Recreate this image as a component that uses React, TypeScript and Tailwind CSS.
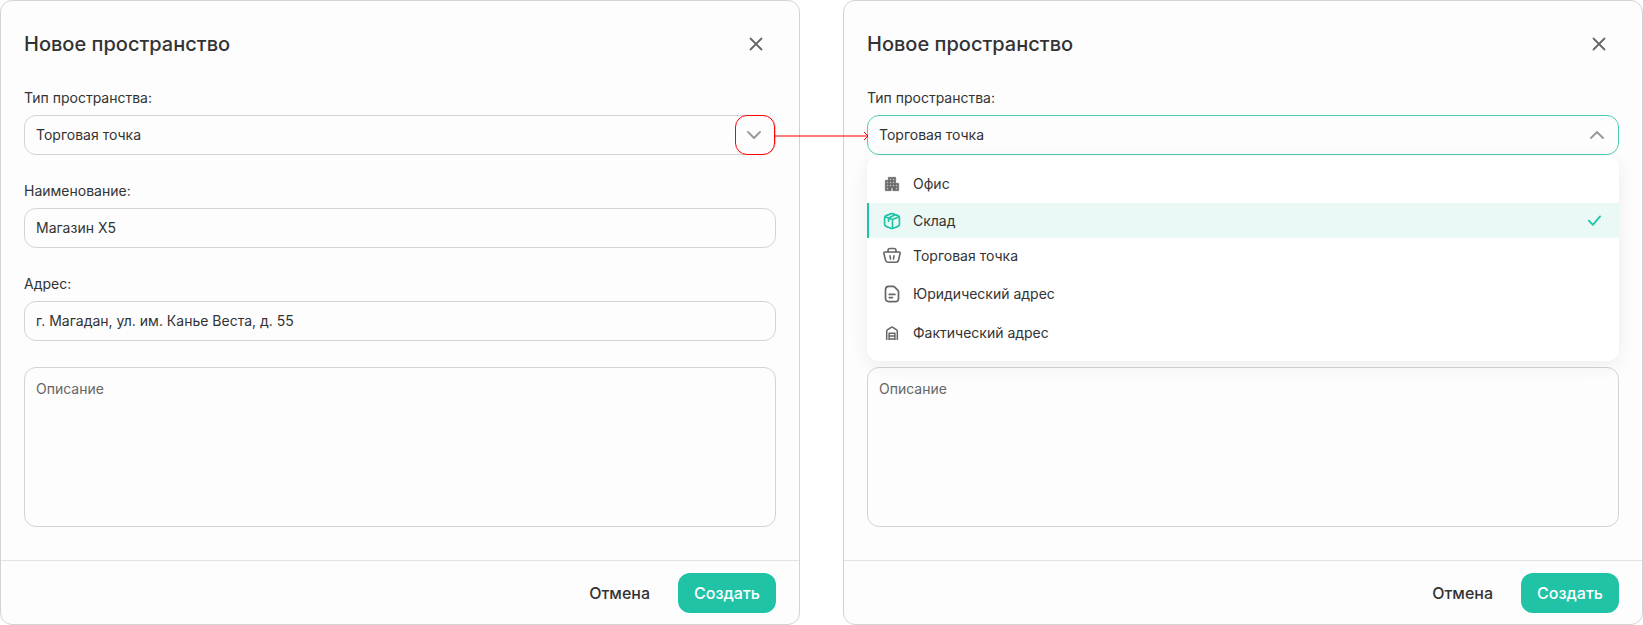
import type { ReactNode } from "react";

const line = {
  fill: "none",
  stroke: "currentColor",
  strokeWidth: 1.5,
  strokeLinecap: "round" as const,
  strokeLinejoin: "round" as const,
};

function CloseIcon() {
  return (
    <svg width="14" height="14" viewBox="0 0 14 14" {...line} strokeWidth={1.8}>
      <path d="M1.5 1.5l11 11M12.5 1.5l-11 11" />
    </svg>
  );
}

function ChevronIcon({ up = false }: { up?: boolean }) {
  return (
    <svg width="14" height="8" viewBox="0 0 14 8" {...line} strokeWidth={1.8}>
      <path d={up ? "M1 7l6-6 6 6" : "M1 1l6 6 6-6"} />
    </svg>
  );
}

function OfficeIcon() {
  return (
    <svg width="18" height="18" viewBox="0 0 24 24" fill="currentColor" stroke="currentColor" strokeWidth="0.6">
      <path d="M17 11V3H7v4H3v14h8v-4h2v4h8V11h-4zM7 19H5v-2h2v2zm0-4H5v-2h2v2zm0-4H5V9h2v2zm4 4H9v-2h2v2zm0-4H9V9h2v2zm0-4H9V5h2v2zm4 8h-2v-2h2v2zm0-4h-2V9h2v2zm0-4h-2V5h2v2zm4 12h-2v-2h2v2zm0-4h-2v-2h2v2z" />
    </svg>
  );
}

function BoxIcon() {
  return (
    <svg width="18" height="18" viewBox="0 0 18 18" {...line} strokeWidth={1.7}>
      <path d="M9 1.700c.4 0 .8.1 1.200.2l4.700 1.700c1 .4 1.500 1 1.500 2.100v6.600c0 1.100-.5 1.700-1.500 2.100l-4.700 1.800c-.8.300-1.600.300-2.400 0l-4.700-1.800c-1-.4-1.500-1-1.500-2.100V5.700c0-1.100.5-1.700 1.500-2.100l4.700-1.700c.4-.1.800-.2 1.200-.2z" />
      <path d="M2 4.700l7.500 2.800 6.500-2.800M9.500 7.500v8.700M12.300 2.800L5.600 6v3.200" />
    </svg>
  );
}

function BasketIcon() {
  return (
    <svg width="18" height="18" viewBox="0 0 18 18" {...line} strokeWidth={1.6}>
      <path d="M5 5V3.600C5 2.200 5.700 1.500 7.100 1.500h3.800c1.400 0 2.100.7 2.100 2.100V5" />
      <path d="M2 5h14c.9 0 1.300.5 1.100 1.400l-1.600 6.800c-.3 1.400-1.100 2-2.500 2H5c-1.400 0-2.200-.6-2.500-2L.9 6.400C.7 5.500 1.100 5 2 5z" />
      <path d="M7 8.800l.5 3.200M11 8.800l-.5 3.200" />
    </svg>
  );
}

function DocumentIcon() {
  return (
    <svg width="18" height="18" viewBox="0 0 18 18" {...line} strokeWidth={1.7}>
      <path d="M5.600 1.300h4.300c.7 0 1.300.3 1.800.8l3 3.100c.5.500.8 1.100.8 1.800v6.200c0 2.200-1.200 3.400-3.400 3.400H5.900c-2.200 0-3.400-1.200-3.400-3.400V4.700c0-2.200 1-3.400 3.100-3.400z" />
      <path d="M6.300 9.400h5.600M6.300 12.600h3.200" />
    </svg>
  );
}

function WarehouseIcon() {
  return (
    <svg width="18" height="18" viewBox="0 0 18 18" {...line} strokeLinecap="butt">
      <path d="M3.700 16V7.200c0-.6.2-1 .7-1.300L8.200 3.300c.5-.4 1.100-.4 1.600 0l3.800 2.600c.5.300.7.700.7 1.300V16" />
      <path d="M6.100 16V9.200h5.800V16M6.100 12h5.800M6.100 15h5.800" />
    </svg>
  );
}

function CheckIcon() {
  return (
    <svg width="14" height="12" viewBox="0 0 14 12" {...line} strokeWidth={1.8}>
      <path d="M.9 5.600l4 4.200 7.200-8.400" />
    </svg>
  );
}

function Label({ children }: { children: ReactNode }) {
  return <div className="h-5 text-sm leading-5">{children}</div>;
}

function TextField({ label, value }: { label: string; value: string }) {
  return (
    <div className="flex flex-col gap-[7px]">
      <Label>{label}</Label>
      <div className="flex h-10 items-center rounded-xl border border-[#d3d3d3] px-[11px] text-sm">{value}</div>
    </div>
  );
}

function Option({ icon, text, className }: { icon: ReactNode; text: string; className: string }) {
  return (
    <div className={`flex items-center ${className}`}>
      <span className="flex w-[18px] justify-center text-[#666]">{icon}</span>
      <span className="ml-3 text-sm">{text}</span>
    </div>
  );
}

function TypeMenu() {
  return (
    <div className="absolute top-[41px] left-0 z-10 flex h-[205px] w-full flex-col overflow-hidden rounded-xl bg-white pt-[7px] shadow-[0_4px_20px_rgba(0,0,0,0.07)]">
      <Option className="h-10 pt-px pl-4" icon={<OfficeIcon />} text="Офис" />
      <div className="flex h-[35px] shrink-0 items-center border-l-2 border-[#20c3a6] bg-[#eaf9f6] pr-[17px] pl-3.5">
        <span className="text-[#20c3a6]">
          <BoxIcon />
        </span>
        <span className="ml-3 text-sm">Склад</span>
        <span className="ml-auto text-[#20c3a6]">
          <CheckIcon />
        </span>
      </div>
      <Option className="h-[35px] pl-4" icon={<BasketIcon />} text="Торговая точка" />
      <Option className="h-10 pt-px pl-4" icon={<DocumentIcon />} text="Юридический адрес" />
      <Option className="h-10 pl-4" icon={<WarehouseIcon />} text="Фактический адрес" />
    </div>
  );
}

function SelectField({ open }: { open: boolean }) {
  return (
    <div className="flex flex-col gap-[7px]">
      <Label>Тип пространства:</Label>
      <div className="relative">
        {open ? (
          <div className="flex h-10 items-center justify-between rounded-xl border border-[#4dcdb6] pr-[14px] pl-[11px] text-sm">
            Торговая точка
            <span className="text-[#999]">
              <ChevronIcon up />
            </span>
          </div>
        ) : (
          <div className="flex h-10 items-center justify-between rounded-xl border border-[#d3d3d3] pl-[11px] text-sm">
            Торговая точка
            <span className="flex size-10 items-center justify-center rounded-xl border border-[#ff0000] bg-[#fdfdfd] pr-0.5 text-[#999]">
              <ChevronIcon />
            </span>
          </div>
        )}
        {open && <TypeMenu />}
        {!open && (
          <svg className="absolute top-[15px] left-full z-20 -ml-px" width="95" height="11" viewBox="0 0 95 11" fill="none" stroke="#ff0000">
            <path d="M0 6H93" strokeWidth="2" strokeOpacity="0.5" />
            <path d="M89 2l4 4-4 4" />
          </svg>
        )}
      </div>
    </div>
  );
}

function SpaceDialog({ open = false }: { open?: boolean }) {
  return (
    <section className="flex h-[625px] w-[800px] shrink-0 flex-col rounded-xl border border-[#d3d3d3] bg-[#fdfdfd]">
      <header className="mb-px flex h-[86px] items-center justify-between pr-[36px] pl-[23px]">
        <h1 className="text-xl font-medium">Новое пространство</h1>
        <span className="text-[#666]">
          <CloseIcon />
        </span>
      </header>
      <div className="flex flex-1 flex-col gap-[26px] px-[23px]">
        <SelectField open={open} />
        <div className="flex h-40 flex-col gap-[26px]">
          {!open && (
            <>
              <TextField label="Наименование:" value="Магазин X5" />
              <TextField label="Адрес:" value="г. Магадан, ул. им. Канье Веста, д. 55" />
            </>
          )}
        </div>
        <div className="h-40 rounded-xl border border-[#d3d3d3] px-[11px] py-[11px] text-sm text-[#666]">Описание</div>
      </div>
      <footer className="flex h-[64px] items-center justify-end gap-7 border-t border-[#e2e2e2] pr-[23px]">
        <button className="text-base font-medium">Отмена</button>
        <button className="h-10 w-[98px] rounded-xl bg-[#20c3a6] text-base font-medium text-white">Создать</button>
      </footer>
    </section>
  );
}

export default function App() {
  return (
    <main className="flex h-[625px] w-[1643px] justify-between overflow-hidden bg-white font-['Inter',sans-serif] text-[#333]">
      <SpaceDialog />
      <SpaceDialog open />
    </main>
  );
}
